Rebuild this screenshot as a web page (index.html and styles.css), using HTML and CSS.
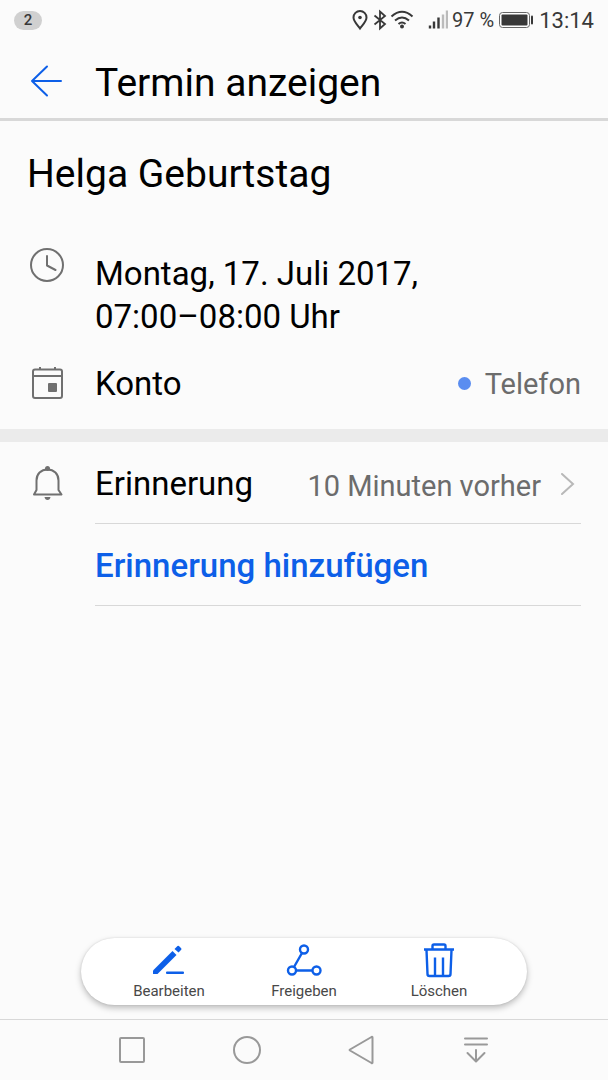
FILE: index.html
```html
<!DOCTYPE html>
<html lang="de">
<head>
<meta charset="utf-8">
<meta name="viewport" content="width=device-width, initial-scale=1">
<title>Termin anzeigen</title>
<link rel="stylesheet" href="styles.css">
</head>
<body>
<div class="status">
  <span class="badge">2</span>
  <div class="status-info">
    <svg class="status-icons" width="96" height="22" viewBox="0 0 96 22" fill="none" stroke="#383838" stroke-width="2">
      <path d="M8 19.500C6 16.500 1.500 12.500 1.500 8.500a6.500 6.500 0 0 1 13 0C14.500 12.500 10 16.500 8 19.500Z"/>
      <circle cx="8" cy="8.500" r="1.800" fill="#383838" stroke="none"/>
      <path d="M22.500 6.500l10.500 8.500-5 4.500v-17l5 4.500-10.500 8.500" stroke-width="1.800"/>
      <path d="M39.500 7.500q10.500-9.500 21 0M43 11.500q7-6 14 0M46.500 15q3.500-3 7 0"/>
      <circle cx="50" cy="17.500" r="2" fill="#383838" stroke="none"/>
      <path d="M78 19.500v-3M82 19.500v-7M86.500 19.500v-11" stroke-width="2.400"/>
      <path d="M91 19.500v-14M95 19.500v-18" stroke="#bbb" stroke-width="2.400"/>
    </svg>
    <span class="percent">97 %</span>
    <svg class="battery" width="35" height="18" viewBox="0 0 35 18">
      <rect x=".5" y="1.500" width="30" height="15" rx="3" fill="#fff" stroke="#666"/>
      <rect x="2.500" y="3.500" width="26" height="11" rx="1" fill="#383838"/>
      <rect x="32" y="4.500" width="2" height="9" rx="1" fill="#383838"/>
    </svg>
    <time class="clock">13:14</time>
  </div>
</div>
<header class="header">
  <button class="back" aria-label="Zurück">
    <svg width="34" height="34" viewBox="0 0 34 34" fill="none" stroke="#0d5fe8" stroke-width="2" stroke-linecap="round" stroke-linejoin="round"><path d="M32 17H3M18 2.500L3 17 18 31.500"/></svg>
  </button>
  <h1>Termin anzeigen</h1>
</header>
<main class="content">
  <section class="details">
    <h2>Helga Geburtstag</h2>
    <div class="row when">
      <svg class="icon" width="34" height="34" viewBox="0 0 34 34" fill="none" stroke="#707070" stroke-width="2" stroke-linecap="round" stroke-linejoin="round"><circle cx="17" cy="17" r="16"/><path d="M17 8v9.500l8.500 4.500"/></svg>
      <p>Montag, 17. Juli 2017,<br>07:00–08:00 Uhr</p>
    </div>
    <div class="row account">
      <svg class="icon" width="34" height="34" viewBox="0 0 34 34" fill="none" stroke="#707070" stroke-width="2"><rect x="3" y="2.500" width="29" height="28.500" rx="2"/><path d="M3 9h29M10 2V0M25 2V0"/><rect x="18" y="16" width="9" height="9" rx="1" fill="#707070" stroke="none"/></svg>
      <div class="field"><span>Konto</span><span class="value telefon">Telefon</span></div>
    </div>
  </section>
  <section class="reminders">
    <button class="row reminder">
      <svg class="icon" width="34" height="36" viewBox="0 0 34 36" fill="none" stroke="#707070" stroke-width="2" stroke-linejoin="round"><path d="M6.500 25V15.500C6.500 9 11 4.500 17.500 4.500S28.500 9 28.500 15.500V25L31.500 29.500H4Z"/><circle cx="17.500" cy="3.500" r="2.500" fill="#707070" stroke="none"/><path d="M14.500 32h6q-.5 3-3 3t-3-3Z" fill="#707070" stroke="none"/></svg>
      <span class="field lined"><span>Erinnerung</span><span class="value">10 Minuten vorher</span>
        <svg class="chevron" width="14" height="22" viewBox="0 0 14 22" fill="none" stroke="#b8b8b8" stroke-width="2" stroke-linecap="round"><path d="M1 1l11 10-11 10"/></svg>
      </span>
    </button>
    <button class="row add"><span class="icon"></span><span class="field lined">Erinnerung hinzufügen</span></button>
  </section>
</main>
<div class="actions">
  <button>
    <svg width="36" height="36" viewBox="0 0 36 36" fill="#0d5fe8"><path d="M2 28.500L21.500 9l4 4L6.500 32H2.500Q2 32 2 31.500Z"/><path d="M23.500 7l3-3q.7-.5 1.400 0l2.300 2.300q.5.700 0 1.400L27.500 10.500Z"/><rect x="15" y="29.500" width="18" height="2.500" rx="1"/></svg>
    <span>Bearbeiten</span>
  </button>
  <button>
    <svg width="36" height="36" viewBox="0 0 36 36" fill="none" stroke="#0d5fe8" stroke-width="2.400"><circle cx="18" cy="7.500" r="4"/><circle cx="6" cy="28.500" r="4"/><circle cx="30.500" cy="28.500" r="4"/><path d="M16 11L8 25M10 28.500h16.500"/></svg>
    <span>Freigeben</span>
  </button>
  <button>
    <svg width="36" height="36" viewBox="0 0 36 36" fill="none" stroke="#0d5fe8" stroke-width="2.400" stroke-linejoin="round"><path d="M3 7.500h30M11.500 7V4q0-1.500 1.500-1.500h10q1.500 0 1.500 1.500v3M5.500 8l1 24q0 2 2 2h19q2 0 2-2l1-24M14 15.500V33M22 15.500V33"/></svg>
    <span>Löschen</span>
  </button>
</div>
<nav class="nav">
  <button aria-label="Übersicht"><svg width="30" height="30" viewBox="0 0 30 30"><rect x="3" y="3" width="24" height="24" rx="1"/></svg></button>
  <button aria-label="Startseite"><svg width="30" height="30" viewBox="0 0 30 30"><circle cx="15" cy="15" r="13"/></svg></button>
  <button aria-label="Zurück"><svg width="30" height="30" viewBox="0 0 30 30"><path d="M25.500 2.500v25q0 1-1 .5L3 15.500q-.8-.5 0-1L24.500 2q1-.5 1 .5Z"/></svg></button>
  <button aria-label="Benachrichtigungen"><svg width="30" height="30" viewBox="0 0 30 30"><path d="M3 3.500h22M3 9.500h22M14 15v11M5.500 18l8.500 8.500 8.500-8.500"/></svg></button>
</nav>
</body>
</html>
```

FILE: styles.css
```css
* { box-sizing: border-box; }
body {
  margin: 0;
  min-height: 100vh;
  display: flex;
  flex-direction: column;
  background: #fbfbfb;
  color: #000;
  font-family: Roboto, "Noto Sans", sans-serif;
  font-size: 33px;
}
h1, h2, p { margin: 0; font-weight: 400; }
button {
  padding: 0;
  border: 0;
  background: none;
  color: inherit;
  font: inherit;
  text-align: left;
  cursor: pointer;
}
svg { display: block; flex: none; }

.status {
  display: flex;
  align-items: center;
  justify-content: space-between;
  height: 40px;
  padding: 0 14px;
  color: #383838;
}
.badge {
  width: 28px;
  border-radius: 10px;
  background: #d0d0d0;
  font-size: 15px;
  font-weight: 500;
  line-height: 19px;
  text-align: center;
}
.status-info { display: flex; align-items: center; }
.percent { margin: 0 5px 0 4px; font-size: 20px; }
.clock { margin-left: 5px; padding-top: 1px; font-size: 22px; }

.header {
  display: flex;
  align-items: center;
  gap: 32px;
  height: 81px;
  padding: 3px 29px 0 29px;
  border-bottom: 3px solid #d8d8d8;
}
h1, h2 { font-size: 39px; line-height: 48px; }
h1 { padding-top: 4px; }

.content { flex: 1; }
.details { border-bottom: 13px solid #ebebeb; }
h2 { padding: 29px 27px 0; }
.row {
  display: flex;
  align-items: center;
  width: 100%;
  padding: 0 27px 0 30px;
}
.icon { width: 34px; margin-right: 31px; }
.field {
  flex: 1;
  display: flex;
  align-items: center;
}
.when { align-items: flex-start; padding-top: 50px; line-height: 43px; }
.when p { padding-top: 4px; }
.account { height: 91px; }
.value { margin-left: auto; color: #6c6c6c; font-size: 29px; }
.telefon { display: flex; align-items: center; gap: 14px; }
.telefon::before {
  content: "";
  width: 13px;
  height: 13px;
  border-radius: 50%;
  background: #5a8df0;
}
.lined { height: 82px; padding-top: 2px; border-bottom: 1px solid #d8d8d8; }
.reminder .value { padding-top: 4px; }
.chevron { margin: 0 6px 0 20px; }
.add { color: #0d5fe8; font-weight: 500; }

.actions {
  display: flex;
  justify-content: center;
  width: calc(100% - 162px);
  margin: 0 auto 14px;
  border-radius: 34px;
  background: #fff;
  box-shadow: 0 3px 6px rgba(0, 0, 0, .25), 0 0 2px rgba(0, 0, 0, .12);
}
.actions button {
  display: flex;
  flex-direction: column;
  align-items: center;
  gap: 3px;
  width: 135px;
  padding: 4px 0;
  color: #484848;
  font-size: 15px;
  line-height: 20px;
}
.nav {
  display: grid;
  grid-template-columns: repeat(4, 1fr);
  height: 61px;
  padding: 0 74px;
  border-top: 1px solid #d8d8d8;
}
.nav button { display: flex; align-items: center; justify-content: center; }
.nav svg { fill: none; stroke: #999; stroke-width: 2; stroke-linecap: round; stroke-linejoin: round; }
```
